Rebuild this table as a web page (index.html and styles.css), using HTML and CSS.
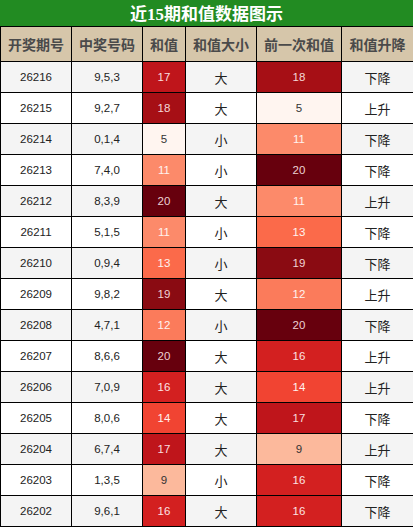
FILE: index.html
```html
<!DOCTYPE html>
<html lang="zh">
<head>
<meta charset="utf-8">
<link rel="stylesheet" href="styles.css">
</head>
<body>
<div class="chart">
  <div class="title"><span class="num">15</span></div>
  <table class="grid">
    <colgroup>
      <col class="c-issue"><col class="c-nums"><col class="c-sum"><col class="c-size"><col class="c-prev"><col class="c-trend">
    </colgroup>
    <thead>
      <tr><th>开奖期号</th><th>中奖号码</th><th>和值</th><th>和值大小</th><th>前一次和值</th><th>和值升降</th></tr>
    </thead>
    <tbody>
      <tr><td class="n">26216</td><td class="n">9,5,3</td><td class="n h17">17</td><td class="cj">大</td><td class="n h18">18</td><td class="cj">下降</td></tr>
      <tr><td class="n">26215</td><td class="n">9,2,7</td><td class="n h18">18</td><td class="cj">大</td><td class="n h5">5</td><td class="cj">上升</td></tr>
      <tr><td class="n">26214</td><td class="n">0,1,4</td><td class="n h5">5</td><td class="cj">小</td><td class="n h11">11</td><td class="cj">下降</td></tr>
      <tr><td class="n">26213</td><td class="n">7,4,0</td><td class="n h11">11</td><td class="cj">小</td><td class="n h20">20</td><td class="cj">下降</td></tr>
      <tr><td class="n">26212</td><td class="n">8,3,9</td><td class="n h20">20</td><td class="cj">大</td><td class="n h11">11</td><td class="cj">上升</td></tr>
      <tr><td class="n">26211</td><td class="n">5,1,5</td><td class="n h11">11</td><td class="cj">小</td><td class="n h13">13</td><td class="cj">下降</td></tr>
      <tr><td class="n">26210</td><td class="n">0,9,4</td><td class="n h13">13</td><td class="cj">小</td><td class="n h19">19</td><td class="cj">下降</td></tr>
      <tr><td class="n">26209</td><td class="n">9,8,2</td><td class="n h19">19</td><td class="cj">大</td><td class="n h12">12</td><td class="cj">上升</td></tr>
      <tr><td class="n">26208</td><td class="n">4,7,1</td><td class="n h12">12</td><td class="cj">小</td><td class="n h20">20</td><td class="cj">下降</td></tr>
      <tr><td class="n">26207</td><td class="n">8,6,6</td><td class="n h20">20</td><td class="cj">大</td><td class="n h16">16</td><td class="cj">上升</td></tr>
      <tr><td class="n">26206</td><td class="n">7,0,9</td><td class="n h16">16</td><td class="cj">大</td><td class="n h14">14</td><td class="cj">上升</td></tr>
      <tr><td class="n">26205</td><td class="n">8,0,6</td><td class="n h14">14</td><td class="cj">大</td><td class="n h17">17</td><td class="cj">下降</td></tr>
      <tr><td class="n">26204</td><td class="n">6,7,4</td><td class="n h17">17</td><td class="cj">大</td><td class="n h9">9</td><td class="cj">上升</td></tr>
      <tr><td class="n">26203</td><td class="n">1,3,5</td><td class="n h9">9</td><td class="cj">小</td><td class="n h16">16</td><td class="cj">下降</td></tr>
      <tr><td class="n">26202</td><td class="n">9,6,1</td><td class="n h16">16</td><td class="cj">大</td><td class="n h16">16</td><td class="cj">下降</td></tr>
    </tbody>
  </table>
</div>
</body>
</html>
```
FILE: styles.css
```css
html, body {
  margin: 0;
  padding: 0;
  background: #ffffff;
}
.chart {
  width: 413px;
}
.title {
  height: 26px;
  background: #228b22;
  color: #ffffff;
  font-family: "Liberation Serif", "Noto Sans CJK SC", serif;
  font-weight: bold;
  font-size: 17px;
  line-height: 26px;
  text-align: center;
}
.title::before {
  content: "近";
  font-family: "Noto Sans CJK SC", sans-serif;
}
.title::after {
  content: "期和值数据图示";
  font-family: "Noto Sans CJK SC", sans-serif;
}
.grid {
  width: 413px;
  border-collapse: collapse;
  table-layout: fixed;
}
.c-issue { width: 71px; }
.c-nums { width: 71px; }
.c-sum { width: 43px; }
.c-size { width: 71px; }
.c-prev { width: 85px; }
.c-trend { width: 72px; }
.grid th, .grid td {
  border: 1px solid #000000;
  padding: 0;
  text-align: center;
  vertical-align: middle;
}
.grid th {
  height: 34px;
  background: #d6c6aa;
  color: #4a4a4a;
  font-family: "Noto Sans CJK SC", sans-serif;
  font-weight: bold;
  font-size: 14px;
}
.grid td {
  height: 30px;
  color: #222222;
}
.grid tbody tr:nth-child(odd) td {
  background: #f4f4f4;
}
.grid tbody tr:nth-child(even) td {
  background: #ffffff;
}
.n {
  font-family: "Liberation Sans", sans-serif;
  font-size: 11.5px;
  color: #333333;
}
.cj {
  font-family: "Noto Sans CJK SC", sans-serif;
  font-size: 13px;
  color: #1a1a1a;
}
.grid tbody tr td.h5 { background: #fff5f0; color: #333333; }
.grid tbody tr td.h9 { background: #fcb99c; color: #333333; }
.grid tbody tr td.h11 { background: #fc8a6a; color: #fff3ef; }
.grid tbody tr td.h12 { background: #fb7b5b; color: #fff3ef; }
.grid tbody tr td.h13 { background: #fb6a4a; color: #fff3ef; }
.grid tbody tr td.h14 { background: #f14432; color: #fff3ef; }
.grid tbody tr td.h16 { background: #d32020; color: #fbe3e3; }
.grid tbody tr td.h17 { background: #bf151b; color: #f8dede; }
.grid tbody tr td.h18 { background: #a60f15; color: #f4d8d8; }
.grid tbody tr td.h19 { background: #8a0b12; color: #f0d4d4; }
.grid tbody tr td.h20 { background: #67000d; color: #ecd2d2; }
```
